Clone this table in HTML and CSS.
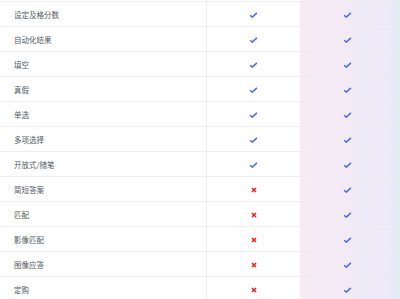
FILE: index.html
```html
<!DOCTYPE html>
<html lang="zh">
<head>
<meta charset="utf-8">
<link rel="stylesheet" href="styles.css">
</head>
<body>
<div class="page">
  <div class="table">
    <div class="col-bg"></div>
    <div class="row"><div class="name">设定及格分数</div><div class="cell"><svg class="ok" viewBox="0 0 10 7"><path d="M1 3.8 L3.6 6 L9 1"/></svg></div><div class="cell pro"><svg class="ok" viewBox="0 0 10 7"><path d="M1 3.8 L3.6 6 L9 1"/></svg></div></div>
    <div class="row"><div class="name">自动化结果</div><div class="cell"><svg class="ok" viewBox="0 0 10 7"><path d="M1 3.8 L3.6 6 L9 1"/></svg></div><div class="cell pro"><svg class="ok" viewBox="0 0 10 7"><path d="M1 3.8 L3.6 6 L9 1"/></svg></div></div>
    <div class="row"><div class="name">填空</div><div class="cell"><svg class="ok" viewBox="0 0 10 7"><path d="M1 3.8 L3.6 6 L9 1"/></svg></div><div class="cell pro"><svg class="ok" viewBox="0 0 10 7"><path d="M1 3.8 L3.6 6 L9 1"/></svg></div></div>
    <div class="row"><div class="name">真假</div><div class="cell"><svg class="ok" viewBox="0 0 10 7"><path d="M1 3.8 L3.6 6 L9 1"/></svg></div><div class="cell pro"><svg class="ok" viewBox="0 0 10 7"><path d="M1 3.8 L3.6 6 L9 1"/></svg></div></div>
    <div class="row"><div class="name">单选</div><div class="cell"><svg class="ok" viewBox="0 0 10 7"><path d="M1 3.8 L3.6 6 L9 1"/></svg></div><div class="cell pro"><svg class="ok" viewBox="0 0 10 7"><path d="M1 3.8 L3.6 6 L9 1"/></svg></div></div>
    <div class="row"><div class="name">多项选择</div><div class="cell"><svg class="ok" viewBox="0 0 10 7"><path d="M1 3.8 L3.6 6 L9 1"/></svg></div><div class="cell pro"><svg class="ok" viewBox="0 0 10 7"><path d="M1 3.8 L3.6 6 L9 1"/></svg></div></div>
    <div class="row"><div class="name">开放式/随笔</div><div class="cell"><svg class="ok" viewBox="0 0 10 7"><path d="M1 3.8 L3.6 6 L9 1"/></svg></div><div class="cell pro"><svg class="ok" viewBox="0 0 10 7"><path d="M1 3.8 L3.6 6 L9 1"/></svg></div></div>
    <div class="row"><div class="name">简短答案</div><div class="cell"><svg class="no" viewBox="0 0 6 6"><path d="M1 1 L5 5 M5 1 L1 5"/></svg></div><div class="cell pro"><svg class="ok" viewBox="0 0 10 7"><path d="M1 3.8 L3.6 6 L9 1"/></svg></div></div>
    <div class="row"><div class="name">匹配</div><div class="cell"><svg class="no" viewBox="0 0 6 6"><path d="M1 1 L5 5 M5 1 L1 5"/></svg></div><div class="cell pro"><svg class="ok" viewBox="0 0 10 7"><path d="M1 3.8 L3.6 6 L9 1"/></svg></div></div>
    <div class="row"><div class="name">影像匹配</div><div class="cell"><svg class="no" viewBox="0 0 6 6"><path d="M1 1 L5 5 M5 1 L1 5"/></svg></div><div class="cell pro"><svg class="ok" viewBox="0 0 10 7"><path d="M1 3.8 L3.6 6 L9 1"/></svg></div></div>
    <div class="row"><div class="name">图像应答</div><div class="cell"><svg class="no" viewBox="0 0 6 6"><path d="M1 1 L5 5 M5 1 L1 5"/></svg></div><div class="cell pro"><svg class="ok" viewBox="0 0 10 7"><path d="M1 3.8 L3.6 6 L9 1"/></svg></div></div>
    <div class="row"><div class="name">定购</div><div class="cell"><svg class="no" viewBox="0 0 6 6"><path d="M1 1 L5 5 M5 1 L1 5"/></svg></div><div class="cell pro"><svg class="ok" viewBox="0 0 10 7"><path d="M1 3.8 L3.6 6 L9 1"/></svg></div></div>
  </div>
  <div class="side"></div>
</div>
</body>
</html>
```
FILE: styles.css
```css
html, body {
  margin: 0;
  padding: 0;
  background: #ffffff;
  overflow: hidden;
}
.page {
  display: flex;
  width: 400px;
  height: 299px;
  overflow: hidden;
}
.table {
  position: relative;
  width: 394px;
  padding-top: 1px;
  display: flex;
  flex-direction: column;
}
.col-bg {
  position: absolute;
  left: 300px;
  top: 0;
  width: 94px;
  height: 100%;
  background: linear-gradient(90deg, #f8ebf3 0%, #f2ebf6 50%, #ebe9fa 100%);
}
.row {
  position: relative;
  display: grid;
  grid-template-columns: 207px 93px 94px;
  height: 24px;
  flex: none;
  border-top: 1px solid #eeeef0;
}
.name {
  padding-left: 14px;
  border-right: 1px solid #eeeef0;
  font-family: "Noto Sans CJK SC", "Noto Sans", sans-serif;
  font-size: 7.5px;
  line-height: 26px;
  color: #555a62;
  white-space: nowrap;
}
.cell {
  display: flex;
  align-items: center;
  justify-content: center;
}
.ok {
  width: 9px;
  height: 6px;
  fill: none;
  stroke: #4d6ef0;
  stroke-width: 1.8;
}
.no {
  width: 6px;
  height: 6px;
  fill: none;
  stroke: #f21d1d;
  stroke-width: 1.6;
}
.side {
  width: 6px;
  height: 100%;
  background: #e4ecf3;
}
```
